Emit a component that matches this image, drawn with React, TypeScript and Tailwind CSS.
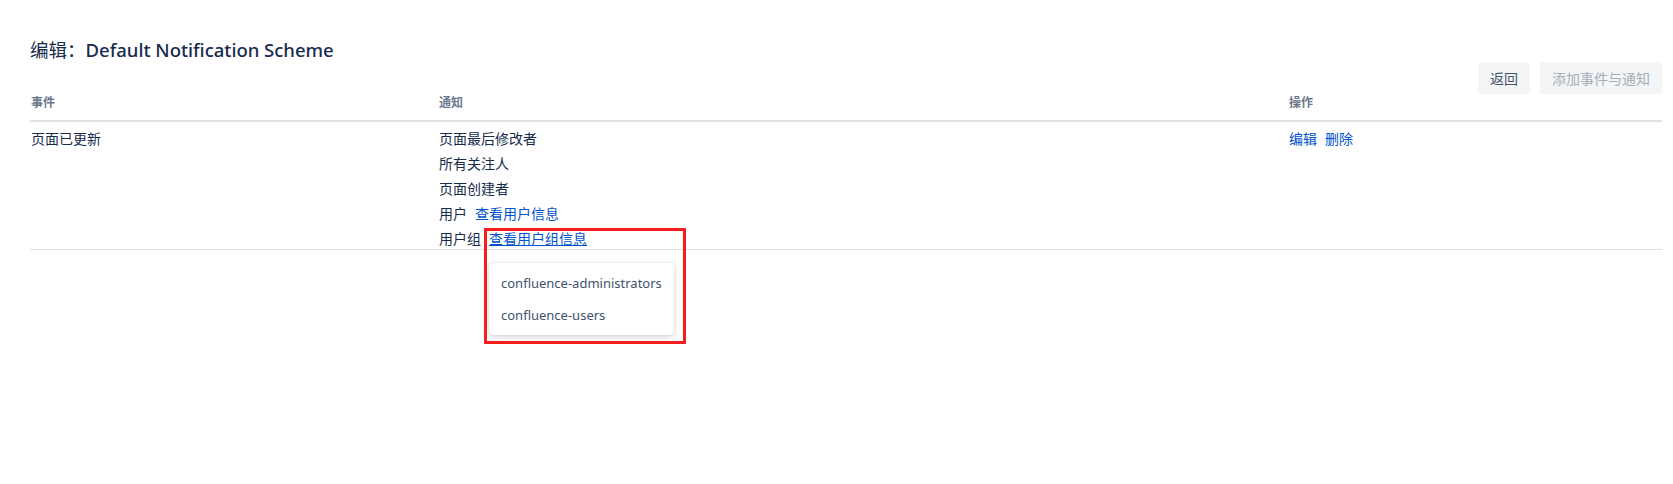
import React from "react";

const linkCls = "text-[#0052cc] cursor-pointer";

export default function App() {
  return (
    <div className="min-h-[484px] w-full bg-white font-['Noto_Sans','Noto_Sans_CJK_SC',sans-serif] text-[#172b4d]">
      <div className="pl-[30px] pr-[11px] pt-[38px]">
        <h1 className="text-[18.5px] leading-[24px] font-normal text-[#172b4d]">
          编辑：<span className="font-medium">Default Notification Scheme</span>
        </h1>
        <div className="flex justify-end gap-[10px] h-[32px]">
          <button className="h-[32px] w-[52px] rounded-[3px] bg-[#f4f5f7] text-[14px] text-[#42526e]">
            返回
          </button>
          <button className="h-[32px] w-[122px] rounded-[3px] bg-[#f4f5f7] text-[14px] text-[#a5adba]">
            添加事件与通知
          </button>
        </div>
        <div className="grid grid-cols-[408px_850px_1fr] border-b-2 border-[#dfe1e6] text-[12px] leading-[16px] font-semibold text-[#6b778c]">
          <div className="pl-[1px] pt-[1px] pb-[9px]">事件</div>
          <div className="pl-[1px] pt-[1px] pb-[9px]">通知</div>
          <div className="pl-[1px] pt-[1px] pb-[9px]">操作</div>
        </div>
        <div className="grid grid-cols-[408px_850px_1fr] border-b border-[#dfe1e6] text-[14px] leading-[20px] pt-[7px]">
          <div className="pl-[1px]">页面已更新</div>
          <div className="pl-[1px] flex flex-col gap-[5px]">
            <div>页面最后修改者</div>
            <div>所有关注人</div>
            <div>页面创建者</div>
            <div>
              用户<span className={`${linkCls} ml-[8px]`}>查看用户信息</span>
            </div>
            <div className="flex">
              用户组
              <span className="relative ml-[8px]">
                <span className={`${linkCls} underline`}>查看用户组信息</span>
                <div className="absolute left-0 top-[34px] w-[185px] rounded-[4px] bg-white py-[4px] shadow-[0_2px_6px_rgba(9,30,66,0.18),0_0_1px_rgba(9,30,66,0.25)] text-[13px] text-[#42526e] z-10">
                  <div className="h-[32px] leading-[32px] px-[12px] whitespace-nowrap">confluence-administrators</div>
                  <div className="h-[32px] leading-[32px] px-[12px] whitespace-nowrap">confluence-users</div>
                </div>
                <div className="absolute left-[-5px] top-[-1px] w-[202px] h-[116px] border-[3px] border-[#f51d1d] z-20 pointer-events-none" />
              </span>
            </div>
          </div>
          <div className="pl-[1px] flex gap-[8px]">
            <span className={linkCls}>编辑</span>
            <span className={linkCls}>删除</span>
          </div>
        </div>
      </div>
    </div>
  );
}
